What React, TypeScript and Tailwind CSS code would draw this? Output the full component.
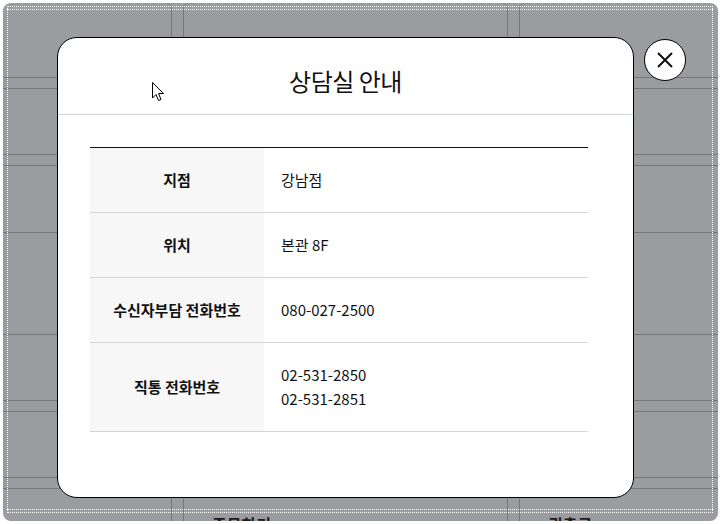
import React from "react";

const rows = [
  { label: "지점", values: ["강남점"], h: "h-[65px]" },
  { label: "위치", values: ["본관 8F"], h: "h-[65px]" },
  { label: "수신자부담 전화번호", values: ["080-027-2500"], h: "h-[65px]" },
  { label: "직통 전화번호", values: ["02-531-2850", "02-531-2851"], h: "h-[89px]" },
];

function Column({ className, children }: { className: string; children?: React.ReactNode }) {
  return (
    <div className={`flex flex-col ${className}`}>
      <div className="h-[75px] border-b border-[#76777b]" />
      <div className="h-[11px] border-b border-[#76777b]" />
      <div className="h-[66px] border-b border-[#76777b]" />
      <div className="h-[11px] border-b border-[#76777b]" />
      <div className="h-[67px] border-b border-[#76777b]" />
      <div className="h-[102px] border-b border-[#76777b]" />
      <div className="h-[66px] border-b border-[#76777b]" />
      <div className="h-[11px] border-b border-[#76777b]" />
      <div className="h-[66px] border-b border-[#76777b]" />
      <div className="h-[11px] border-b border-[#76777b]" />
      <div className="flex-1 relative overflow-hidden">{children}</div>
    </div>
  );
}

export default function App() {
  return (
    <div className="relative w-[721px] h-[524px] bg-white overflow-hidden font-['Noto_Sans_CJK_KR','Noto_Sans',sans-serif]">
      {/* dimmed page underneath */}
      <div className="m-[3px] h-[518px] rounded-[8px] bg-[#9b9ca0] flex overflow-hidden">
        <Column className="w-[169px] border-r border-[#76777b] rounded-tr-[6px]">
          <div className="pl-[134px] pt-[21px] text-[16px] font-bold text-[#1a1a1a] leading-none">.</div>
        </Column>
        <div className="w-[11px]" />
        <Column className="w-[325px] border-x border-[#76777b] rounded-t-[6px]">
          <div className="flex pt-[27px] text-[16px] font-bold text-[#1a1a1a] leading-none">
            <span className="pl-[28px]">주문하기</span>
            <span className="pl-[220px]">.</span>
          </div>
        </Column>
        <div className="w-[11px]" />
        <Column className="flex-1 border-l border-[#76777b] rounded-tl-[6px]">
          <div className="pl-[28px] pt-[27px] text-[16px] font-bold text-[#1a1a1a] leading-none">퀵출금</div>
        </Column>
      </div>

      {/* dotted focus outline */}
      <div className="absolute left-[7px] right-[8px] top-[6px] bottom-[11px] border border-dotted border-white pointer-events-none" />
      <div className="absolute left-[7px] right-[8px] top-[9px] h-0 border-t border-dotted border-white pointer-events-none" />
      <div className="absolute left-[7px] right-[8px] bottom-[14px] h-0 border-t border-dotted border-white pointer-events-none" />

      {/* modal */}
      <div className="absolute left-[57px] top-[37px] w-[577px] h-[461px] bg-white border border-black rounded-[20px] overflow-hidden flex flex-col">
        <div className="h-[77px] border-b border-[#d6d6de] flex items-center justify-center pt-[10px]">
          <h2 className="text-[24px] font-normal text-[#111] leading-none tracking-[-0.5px]">상담실 안내</h2>
        </div>
        <div className="pl-[32px] pt-[32px]">
          <div className="w-[498px] border-t border-[#111]">
            {rows.map((r) => (
              <div key={r.label} className={`flex ${r.h} border-b border-[#d3d3da]`}>
                <div className="w-[174px] bg-[#f7f7f8] flex items-center justify-center text-[15px] font-bold text-[#111]">
                  {r.label}
                </div>
                <div className="flex-1 flex flex-col justify-center pl-[17px] text-[15px] text-[#111] leading-[24px]">
                  {r.values.map((v) => (
                    <div key={v}>{v}</div>
                  ))}
                </div>
              </div>
            ))}
          </div>
        </div>
      </div>

      {/* close button */}
      <button className="absolute left-[644px] top-[39px] w-[42px] h-[42px] rounded-full bg-white border border-black flex items-center justify-center">
        <svg width="18" height="18" viewBox="0 0 18 18" fill="none" stroke="#111" strokeWidth="2">
          <path d="M2 2 L16 16 M16 2 L2 16" />
        </svg>
      </button>

      {/* mouse cursor */}
      <svg className="absolute left-[152px] top-[82px]" width="13" height="20" viewBox="0 0 13 20">
        <path d="M0.5 0.5 L0.5 16 L4 12.5 L6.5 18.5 L9 17.5 L6.5 11.5 L11.5 11.5 Z" fill="#fff" stroke="#000" strokeWidth="1" strokeLinejoin="round" />
      </svg>
    </div>
  );
}
